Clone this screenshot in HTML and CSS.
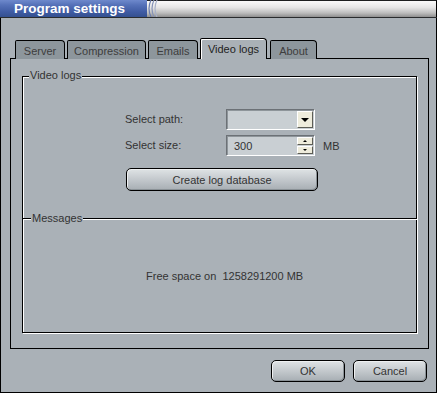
FILE: index.html
```html
<!DOCTYPE html>
<html>
<head>
<meta charset="utf-8">
<link rel="stylesheet" href="styles.css">
</head>
<body>
<div class="window">
  <div class="titlebar">
    <div class="title-left"><span class="title">Program settings</span></div>
    <div class="title-right">
      <svg class="arcs" width="12" height="17" viewBox="0 0 12 17">
        <path d="M4 0 Q0 8.5 4 17" fill="none" stroke="#6d7fae" stroke-width="1.2"/>
        <path d="M7 0 Q3 8.5 7 17" fill="none" stroke="#8593b8" stroke-width="1.2"/>
        <path d="M10 0 Q6 8.5 10 17" fill="none" stroke="#a8b1c9" stroke-width="1.2"/>
      </svg>
    </div>
  </div>
  <div class="body">
    <div class="tabs">
      <div class="tab t-server">Server</div>
      <div class="tab t-comp">Compression</div>
      <div class="tab t-emails">Emails</div>
      <div class="tab tab-active t-video">Video logs</div>
      <div class="tab t-about">About</div>
    </div>
    <div class="panel">
      <div class="frame">
        <div class="section section-top">
          <span class="legend legend-video">Video logs</span>
          <div class="form">
            <label class="label">Select path:</label>
            <div class="field">
              <span class="field-value"></span>
              <span class="drop-btn"><span class="tri-down"></span></span>
            </div>
            <span></span>
            <label class="label">Select size:</label>
            <div class="field">
              <span class="field-value">300</span>
              <span class="spin">
                <span class="spin-btn"><span class="tri-up-s"></span></span>
                <span class="spin-btn"><span class="tri-down-s"></span></span>
              </span>
            </div>
            <span class="unit">MB</span>
          </div>
          <button class="btn btn-create">Create log database</button>
        </div>
        <div class="section section-msg">
          <span class="legend legend-msg">Messages</span>
          <p class="message">Free space on&nbsp; 1258291200 MB</p>
        </div>
      </div>
    </div>
    <div class="footer">
      <button class="btn btn-dialog">OK</button>
      <button class="btn btn-dialog">Cancel</button>
    </div>
  </div>
</div>
</body>
</html>
```
FILE: styles.css
```css
* { box-sizing: border-box; }
html, body { margin: 0; padding: 0; }
body {
  width: 437px;
  height: 393px;
  background: #aab1b7;
  font-family: "Liberation Sans", Arial, sans-serif;
  font-size: 11px;
  color: #333;
  overflow: hidden;
}
.window {
  width: 437px;
  height: 393px;
  display: flex;
  flex-direction: column;
}
.titlebar {
  height: 18px;
  display: flex;
  border-bottom: 1px solid #2a2c2e;
  flex-shrink: 0;
}
.title-left {
  width: 147px;
  background: linear-gradient(#6e89cc 0%, #5571b8 30%, #3f5ba3 70%, #34508f 100%);
  display: flex;
  align-items: center;
  padding-left: 14px;
}
.title {
  color: #fff;
  font-weight: bold;
  font-size: 13.5px;
  white-space: nowrap;
  line-height: 17px;
}
.title-right {
  flex: 1;
  background: linear-gradient(#fafafa 0%, #e6e6e6 40%, #bdbdbd 75%, #8f8f8f 100%);
  border-top: 1px solid #1d1f20;
  border-right: 1px solid #000;
  display: flex;
}
.arcs { display: block; margin-top: -1px; }
.body {
  flex: 1;
  border-left: 1px solid #000;
  border-right: 1px solid #000;
  border-bottom: 1px solid #000;
  padding: 20px 7px 10px 9px;
  display: flex;
  flex-direction: column;
}
.tabs {
  display: flex;
  align-items: flex-end;
  gap: 2px;
  margin-left: 5px;
  height: 21px;
  margin-bottom: -1px;
  position: relative;
  z-index: 1;
}
.tab {
  height: 19px;
  background: #8d969c;
  border: 1px solid #000;
  border-bottom: none;
  border-radius: 2px 4px 0 0;
  color: #3d3d3d;
  display: flex;
  align-items: center;
  justify-content: center;
  white-space: nowrap;
  padding-top: 1px;
}
.t-server { width: 50px; }
.t-comp { width: 79px; }
.t-emails { width: 50px; }
.t-video { width: 67px; }
.t-about { width: 47px; margin-left: 1px; }
.tab-active {
  height: 21px;
  background: #aab1b7;
  color: #222;
  box-shadow: inset 1px 1px 0 #fff;
  padding-bottom: 2px;
}
.panel {
  height: 291px;
  border: 1px solid #000;
  padding: 17px 11px 15px 11px;
}
.frame {
  height: 257px;
  border: 1px solid #000;
  box-shadow: inset 1px 1px 0 #fff, 1px 1px 0 #fff;
  display: flex;
  flex-direction: column;
}
.section { position: relative; }
.section-top {
  height: 141px;
  padding-top: 32px;
}
.section-msg {
  flex: 1;
  border-top: 1px solid #000;
  box-shadow: inset 0 1px 0 #fff;
  margin-right: -1px;
  padding-top: 51px;
}
.legend {
  position: absolute;
  background: #aab1b7;
  line-height: 13px;
  padding: 0 1px;
  color: #333;
}
.legend-video { left: 6px; top: -8px; }
.legend-msg { left: 8px; top: -7px; }
.form {
  display: grid;
  grid-template-columns: 101px 89px auto;
  column-gap: 0;
  row-gap: 5px;
  align-items: center;
  padding-left: 102px;
}
.label { color: #333; line-height: 13px; }
.field {
  height: 21px;
  background: #c9cfd3;
  border-top: 1px solid #6c7176;
  border-left: 1px solid #6c7176;
  border-right: 1px solid #fff;
  border-bottom: 1px solid #fff;
  box-shadow: inset 1px 1px 0 #8e959a;
  display: flex;
  align-items: center;
  justify-content: space-between;
  padding: 1px 1px 1px 7px;
}
.field-value { color: #333; }
.drop-btn {
  width: 16px;
  height: 17px;
  background: #eeecdc;
  border-top: 1px solid #fff;
  border-left: 1px solid #fff;
  border-right: 1px solid #5d5d55;
  border-bottom: 1px solid #5d5d55;
  display: flex;
  align-items: center;
  justify-content: center;
}
.tri-down {
  width: 0; height: 0;
  border-left: 4px solid transparent;
  border-right: 4px solid transparent;
  border-top: 4px solid #000;
}
.spin {
  width: 16px;
  height: 17px;
  display: flex;
  flex-direction: column;
  gap: 1px;
}
.spin-btn {
  flex: 1;
  background: #eeecdc;
  border-top: 1px solid #fff;
  border-left: 1px solid #fff;
  border-right: 1px solid #5d5d55;
  border-bottom: 1px solid #5d5d55;
  display: flex;
  align-items: center;
  justify-content: center;
}
.tri-up-s {
  width: 0; height: 0;
  border-left: 2px solid transparent;
  border-right: 2px solid transparent;
  border-bottom: 2px solid #000;
}
.tri-down-s {
  width: 0; height: 0;
  border-left: 2px solid transparent;
  border-right: 2px solid transparent;
  border-top: 2px solid #000;
}
.unit { color: #333; margin-left: 8px; }
.btn {
  font-family: "Liberation Sans", Arial, sans-serif;
  font-size: 11px;
  color: #333;
  border: 1px solid #000;
  border-radius: 5px;
  background: linear-gradient(#dfe3e5 0%, #c6cbcf 45%, #a7aeb3 100%);
  box-shadow: inset 1px 1px 0 #eef0f1, inset -1px -1px 0 #8a9196;
  padding: 0;
  display: block;
}
.btn-create {
  width: 192px;
  height: 23px;
  margin: 12px 0 0 103px;
}
.message {
  margin: 0 0 0 123px;
  line-height: 13px;
  color: #333;
}
.footer {
  margin-top: 11px;
  display: flex;
  justify-content: flex-end;
  gap: 8px;
  padding-right: 2px;
}
.btn-dialog {
  width: 74px;
  height: 22px;
}
```
